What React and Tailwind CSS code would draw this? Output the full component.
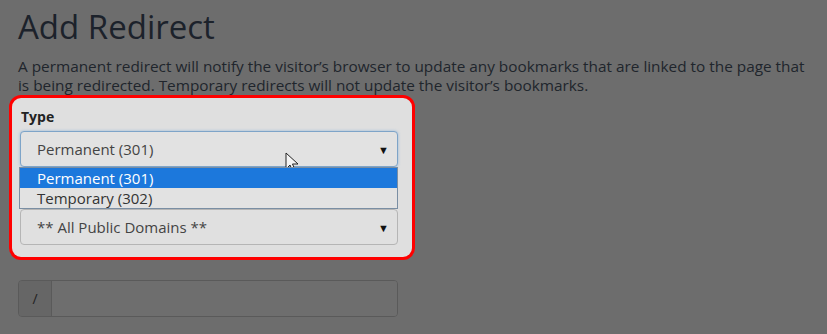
import React from "react";

const font = { fontFamily: '"Open Sans", "Noto Sans", sans-serif' };

function Caret() {
  return <span className="ml-auto text-[11px] leading-none text-[#111]">▼</span>;
}

function Cursor() {
  return (
    <svg className="absolute left-[285px] top-[152px]" width="14" height="22" viewBox="0 0 14 22">
      <path d="M1 1 L1 17 L5 13 L8 20 L10.5 19 L7.5 12 L13 12 Z" fill="#f4f4f4" stroke="#222" strokeWidth="1" strokeLinejoin="round" />
    </svg>
  );
}

export default function App() {
  return (
    <div className="relative h-[334px] w-[827px] overflow-hidden bg-[#6d6d6d] text-[#1f2329]" style={font}>
      <div className="px-[18px] pt-[5px]">
        <h1 className="text-[33px] font-normal leading-[44px] text-[#1c222b]">Add Redirect</h1>
        <p className="mt-[8px] text-[15.35px] leading-[19px] text-[#20252c]">
          A permanent redirect will notify the visitor’s browser to update any bookmarks that are linked to the page that is being redirected. Temporary redirects will not update the visitor’s bookmarks.
        </p>
      </div>

      <div className="ml-[9px] h-[165px] w-[406px] rounded-[12px] border-[3px] border-[#ff0000] bg-[#dfdfdf] px-[8px] pt-[10px]">
        <div className="pl-[1px] text-[14px] font-bold leading-[18px] text-[#222]">Type</div>
        <div className="relative mt-[5px]">
          <div className="flex h-[36px] w-[378px] items-center rounded-[4px] border border-[#7ea4c8] bg-[#e2e2e2] pl-[16px] pr-[8px] text-[15px] text-[#444] shadow-[0_0_3px_rgba(102,160,220,0.6)]">
            <span>Permanent (301)</span>
            <Caret />
          </div>
          <div className="absolute left-[-1px] top-[36px] z-10 w-[379px] border border-[#7a8ea3] bg-[#e2e2e2] text-[15px] leading-[20px]">
            <div className="bg-[#1c78dc] pl-[17px] text-white">Permanent (301)</div>
            <div className="pl-[17px] text-[#333]">Temporary (302)</div>
          </div>
          <div className="mt-[42px] flex h-[36px] w-[378px] items-center rounded-[4px] border border-[#b5b5b5] bg-[#e0e0e0] pl-[16px] pr-[8px] text-[15px] text-[#444]">
            <span>** All Public Domains **</span>
            <Caret />
          </div>
        </div>
      </div>

      <div className="ml-[18px] mt-[20px] flex h-[37px] w-[380px] overflow-hidden rounded-[4px] border border-[#5a5a5a]">
        <div className="flex w-[33px] items-center justify-center border-r border-[#5a5a5a] bg-[#666] text-[14px] text-[#222]">/</div>
        <div className="flex-1 bg-[#6e6e6e]" />
      </div>

      <Cursor />
    </div>
  );
}
